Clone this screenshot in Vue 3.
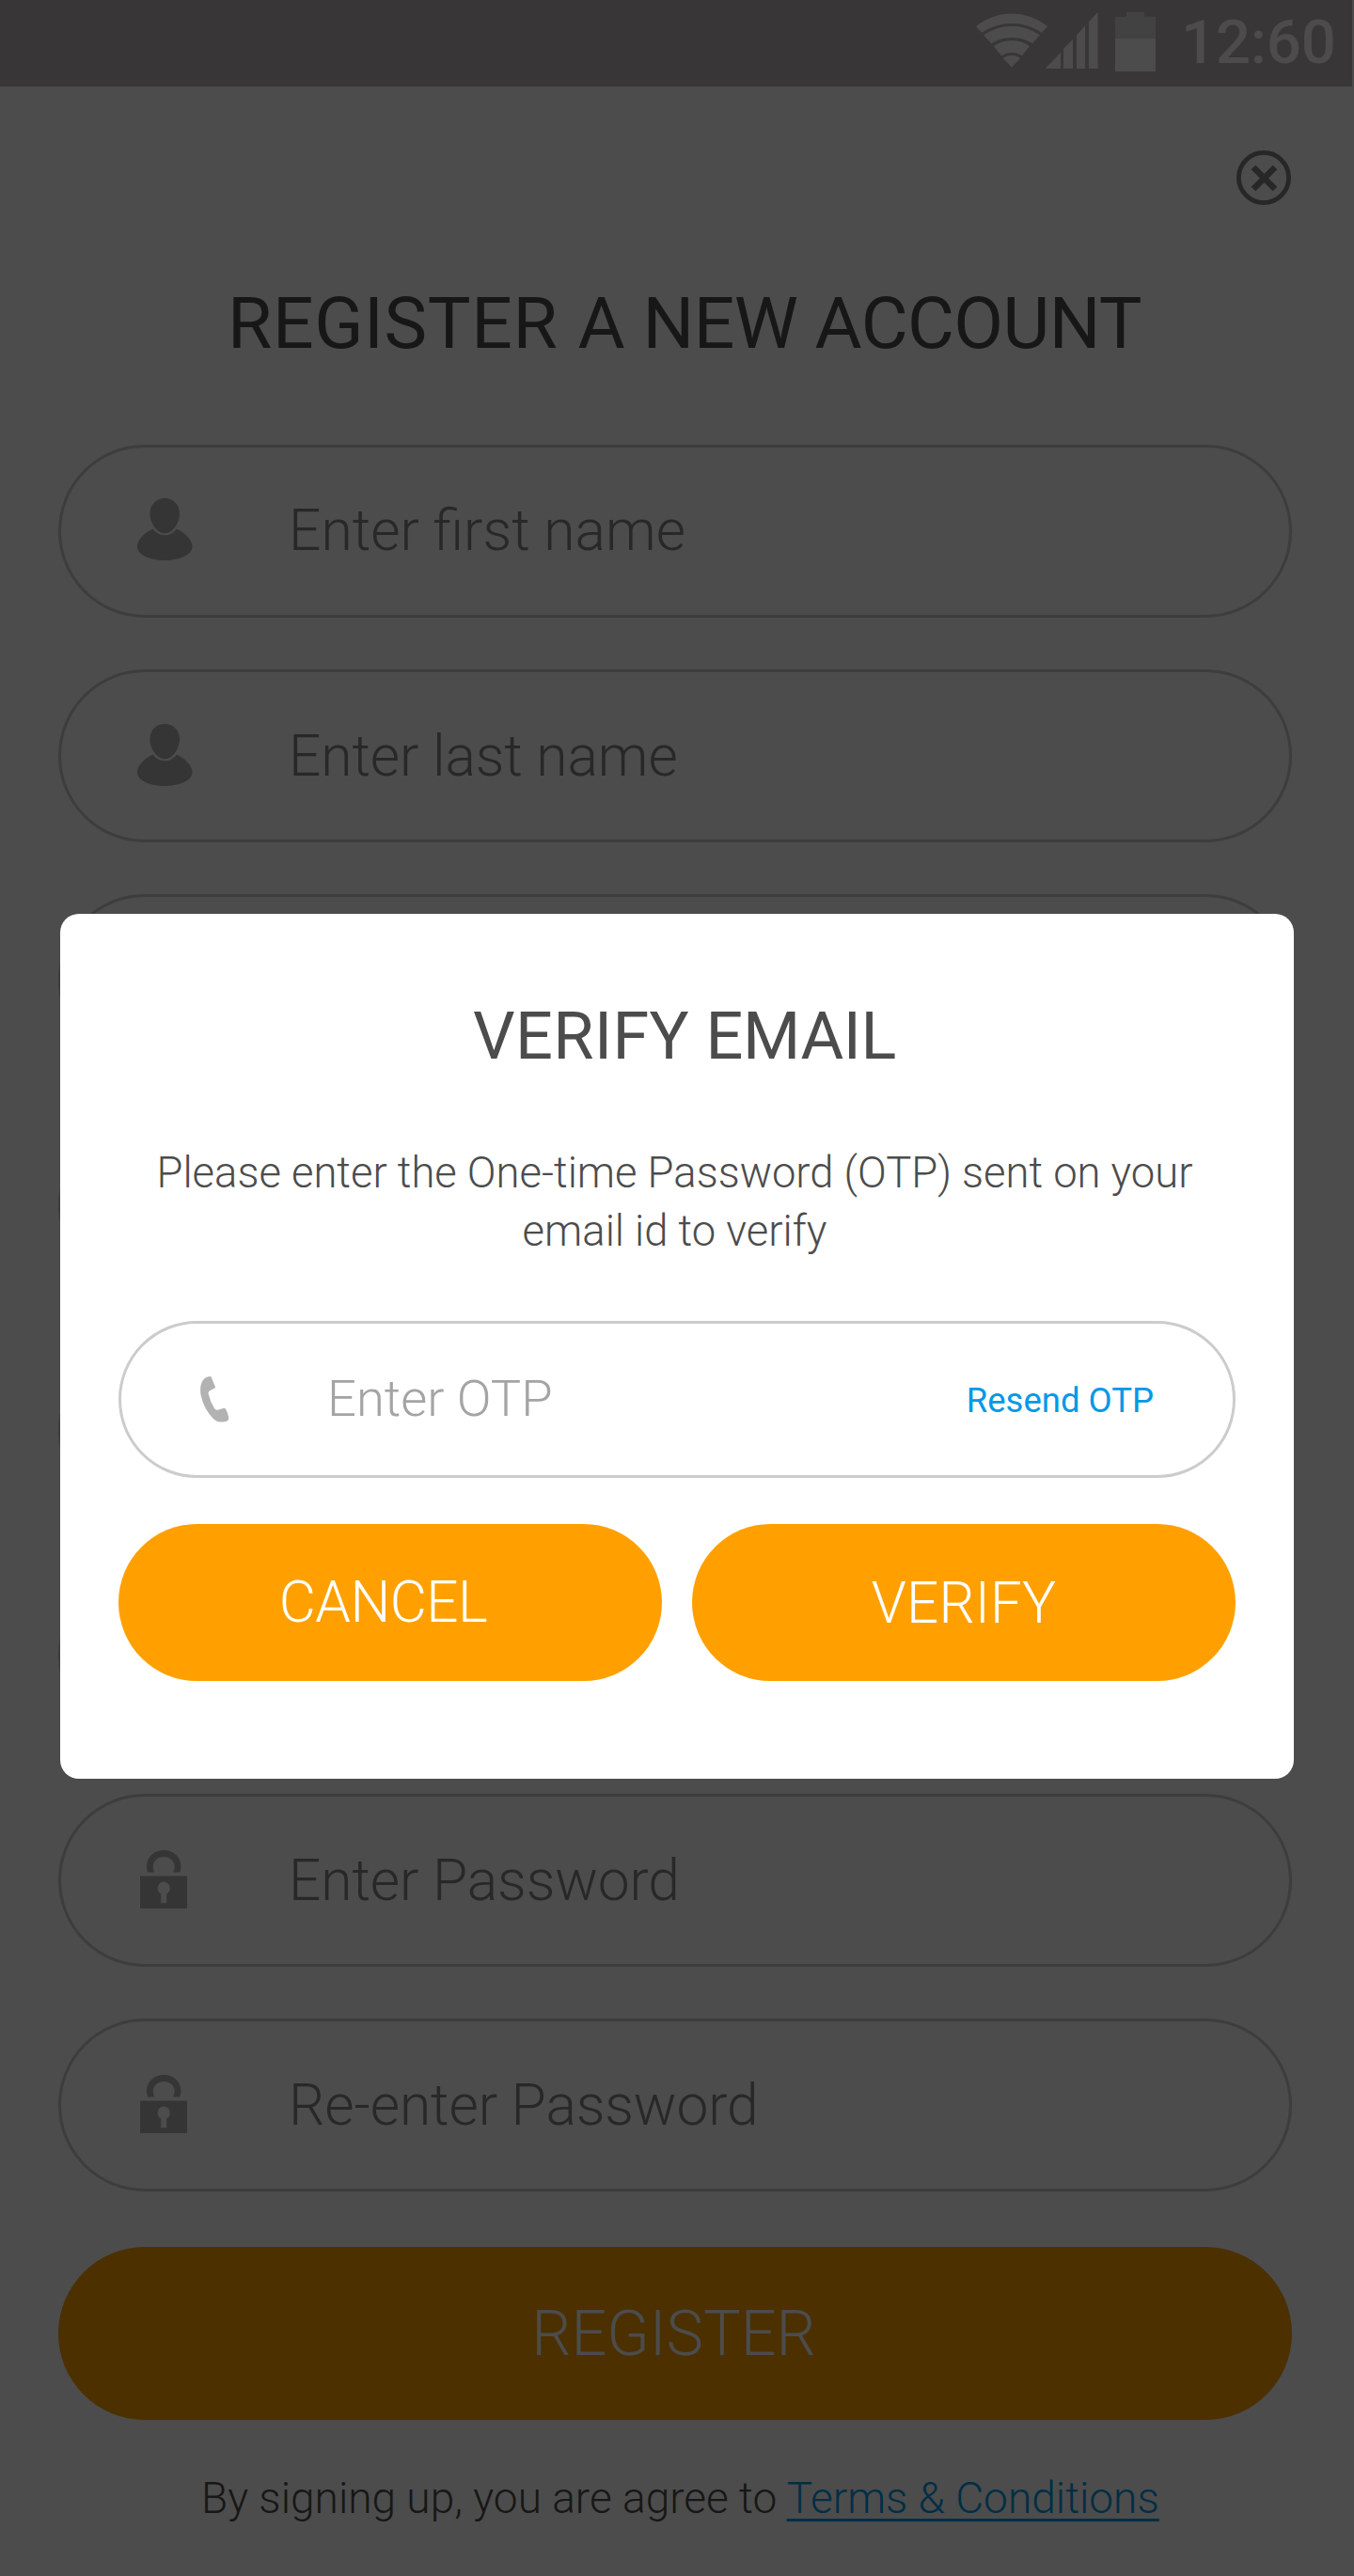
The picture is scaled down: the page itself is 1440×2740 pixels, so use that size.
<script setup>
const fields = [
  { icon: 'user', label: 'Enter first name' },
  { icon: 'user', label: 'Enter last name' },
  { icon: '', label: '' },
  { icon: '', label: '' },
  { icon: '', label: '' },
  { icon: '', label: '' },
  { icon: 'lock', label: 'Enter Password' },
  { icon: 'lock', label: 'Re-enter Password' }
]
</script>

<template>
  <div class="screen">
    <header class="status">
      <svg class="status-icons" viewBox="0 0 708 276" aria-hidden="true">
        <g fill="#4c4c4c">
          <path d="M54 84A182 182 0 0 1 282 84L264 104A173 173 0 0 0 72 104Z" />
          <path d="M78 112A154 154 0 0 1 258 112L234 139A121 121 0 0 0 103 139Z" />
          <path d="M110 147A102 102 0 0 1 226 147L201 178A59 59 0 0 0 135 178Z" />
          <path d="M140 185A53 53 0 0 1 196 185L168 215Z" />
          <path d="M275 219L324 167V219ZM333 219V156L363 125V219ZM375 219V112L402 82V219ZM414 219V69L443 38V219Z" />
          <path d="M498 123H627V228H498Z" />
        </g>
        <path fill="#424242" d="M498 54H534V38H591V54H627V123H498Z" />
      </svg>
      <span class="time">12:60</span>
    </header>

    <main class="page">
      <button class="close" aria-label="Close">
        <svg viewBox="0 0 58 58">
          <circle cx="29" cy="29" r="26.6" fill="none" stroke="#272727" stroke-width="4.8" />
          <path d="M18 18L41 41M41 18L18 41" stroke="#272727" stroke-width="6.6" />
        </svg>
      </button>

      <h1><span class="loose">REGISTER</span> A <span class="tight">NEW ACCOUNT</span></h1>

      <div class="fields">
        <div v-for="(field, i) in fields" :key="i" class="field">
          <span class="icon">
            <svg v-if="field.icon === 'user'" class="user" viewBox="0 0 60 67">
              <path d="M30.2 0C39.5 0 46 7 46 16.5C46 26 38.5 37.3 30.2 37.3S14.4 26 14.4 16.5C14.4 7 20.9 0 30.2 0Z" />
              <path d="M17.5 32.7C21 37 25.5 39.3 30.2 39.3S39.5 37 42.8 32.7C52 36.5 59.5 44.5 59.5 51.5C59.5 59.5 47 66 30.2 66S.9 59.5 .9 51.5C.9 44.5 8.5 36.5 17.5 32.7Z" />
            </svg>
            <svg v-else-if="field.icon === 'lock'" class="lock" viewBox="0 0 50 62">
              <path d="M8 23.5C7.3 20.5 7 18.500 7 17C7 7 15 0 25.200 0S43.400 7 43.400 17C43.400 18.500 43.200 20.500 42.500 23.500H35.200C36.200 21.500 36.700 19.500 36.700 17.500C36.700 11.500 31.500 7 25.200 7S13.800 11.500 13.800 17.500C13.800 19.500 14.300 21.500 15.200 23.500Z" />
              <path fill-rule="evenodd" d="M0 27.500H50V62H0ZM25.200 33.600A6.900 6.900 0 0 0 22.200 46.500V56.300H28.200V46.500A6.900 6.900 0 0 0 25.200 33.600Z" />
            </svg>
          </span>
          <span class="label">{{ field.label }}</span>
        </div>
      </div>

      <button class="register">REGISTER</button>

      <p class="terms">By signing up, you are agree to <a>Terms &amp; Conditions</a></p>
    </main>

    <section class="dialog" role="dialog">
      <h2><span class="first">VERIFY</span> <span class="second">EMAIL</span></h2>
      <p class="message">Please enter the One-time Password (OTP) sent on your<br />email id to verify</p>
      <div class="otp">
        <svg class="phone" viewBox="0 0 31 49">
          <path d="M10.2 0L11.6 .6L16 11.3L15.5 12.5L10 15.2Q8.3 16.3 8.6 18.5Q10.5 27 15.3 34.6Q16.400 36 18.300 35.700L24.500 33.900Q26.300 33.700 27.200 35Q29.200 38.500 30.300 44Q30.500 46 28.500 47.500Q26 48.600 22 48.500Q17.500 48.500 14.300 45.500Q3.500 34.500 .5 19.500Q-.3 13.500 .6 9.500Q2.200 3.300 6 1.200Q8 .2 10.200 0Z" />
        </svg>
        <span class="otp-label">Enter OTP</span>
        <a class="resend">Resend OTP</a>
      </div>
      <div class="actions">
        <button class="cancel">CANCEL</button>
        <button class="verify">VERIFY</button>
      </div>
    </section>
  </div>
</template>

<style>
body {
  background: #4c4c4c;
}
</style>

<style scoped>
.screen {
  position: relative;
  width: 1440px;
  height: 2740px;
  overflow: hidden;
  background: #4c4c4c;
  font-family: Roboto, "Liberation Sans", sans-serif;
}

h1,
h2,
p {
  margin: 0;
  font-weight: 400;
  white-space: nowrap;
}

button {
  border: 0;
  padding: 0;
  background: none;
  font-family: inherit;
  font-weight: 300;
}

svg {
  display: block;
}

.status {
  display: flex;
  box-sizing: border-box;
  width: 1438px;
  height: 92px;
  padding-left: 1020px;
  background: #393637;
}

.status-icons {
  flex: none;
  width: 236px;
  height: 92px;
}

.time {
  color: #4c4c4c;
  font-size: 65.3px;
  font-weight: 500;
  line-height: 90px;
  letter-spacing: -0.2px;
}

.page {
  display: flex;
  flex-direction: column;
  padding: 68px 66px 0 62px;
}

.close {
  align-self: flex-end;
  width: 58px;
  height: 58px;
  margin-right: 1px;
}

h1 {
  margin: 81px 0 84px;
  padding-left: 180px;
  color: #171717;
  font-size: 76.8px;
  line-height: 90px;
}

.loose {
  margin-right: 2px;
  letter-spacing: 0.6px;
}

.tight {
  letter-spacing: -0.65px;
}

.fields {
  display: grid;
  grid-auto-rows: 184px;
  row-gap: 55.14px;
}

.field {
  display: flex;
  box-sizing: border-box;
  border: 3px solid #3d3d3d;
  border-radius: 92px;
}

.icon {
  flex: none;
  width: 162px;
  padding: 54px 0 0 80px;
  fill: #353535;
}

.user {
  width: 60px;
  height: 67px;
}

.lock {
  width: 50px;
  height: 62px;
  margin: 3px 0 0 4px;
}

.label {
  color: #282828;
  font-size: 60.5px;
  font-weight: 300;
  line-height: 178px;
}

.field + .field .label {
  padding-top: 1px;
  letter-spacing: -0.1px;
}

.field + .field .user {
  margin-top: 1px;
}

.register {
  height: 184px;
  margin-top: 59px;
  padding-right: 3px;
  border-radius: 92px;
  background: #4c3000;
  color: #4c4c4c;
  font-size: 66.5px;
}

.terms {
  margin-top: 53px;
  padding-left: 152px;
  color: #171717;
  font-size: 46.05px;
  font-weight: 300;
  line-height: 60px;
}

.terms a {
  color: #002e45;
  text-decoration: underline;
  text-decoration-thickness: 3px;
  text-underline-offset: 6px;
  text-decoration-skip-ink: none;
}

.dialog {
  position: absolute;
  top: 972px;
  left: 64px;
  display: flex;
  flex-direction: column;
  box-sizing: border-box;
  width: 1312px;
  height: 920px;
  padding: 88px 62px 0;
  border-radius: 20px;
  background: #fff;
  text-align: center;
}

h2 {
  padding-left: 16px;
  color: #4c4c4c;
  font-size: 70.2px;
  line-height: 84px;
}

.first {
  letter-spacing: 0.35px;
}

.second {
  letter-spacing: -0.4px;
}

.message {
  margin-top: 72.6px;
  padding-right: 5px;
  color: #4c4c4c;
  font-size: 45.4px;
  font-weight: 300;
  line-height: 62.5px;
}

.otp {
  display: flex;
  box-sizing: border-box;
  height: 167px;
  margin-top: 63.4px;
  padding: 0 84px 0 84px;
  border: 3px solid #ccc;
  border-radius: 84px;
  line-height: 161px;
}

.phone {
  width: 31px;
  height: 49px;
  margin-top: 56px;
  fill: #b2b2b2;
}

.otp-label {
  margin: -1px 0 0 104px;
  color: #a4a4a4;
  font-size: 54.3px;
  font-weight: 300;
}

.resend {
  margin: 1px 0 0 auto;
  color: #0099e5;
  font-size: 36.5px;
}

.actions {
  display: grid;
  grid-template-columns: 1fr 1fr;
  gap: 32px;
  margin-top: 49px;
}

.actions button {
  height: 167px;
  border-radius: 84px;
  background: #ffa000;
  color: #fff;
  font-size: 60.2px;
}

.actions .cancel {
  padding: 1px 15px 0 0;
  letter-spacing: -0.5px;
}

.actions .verify {
  padding-top: 3px;
  letter-spacing: 0.15px;
}
</style>
